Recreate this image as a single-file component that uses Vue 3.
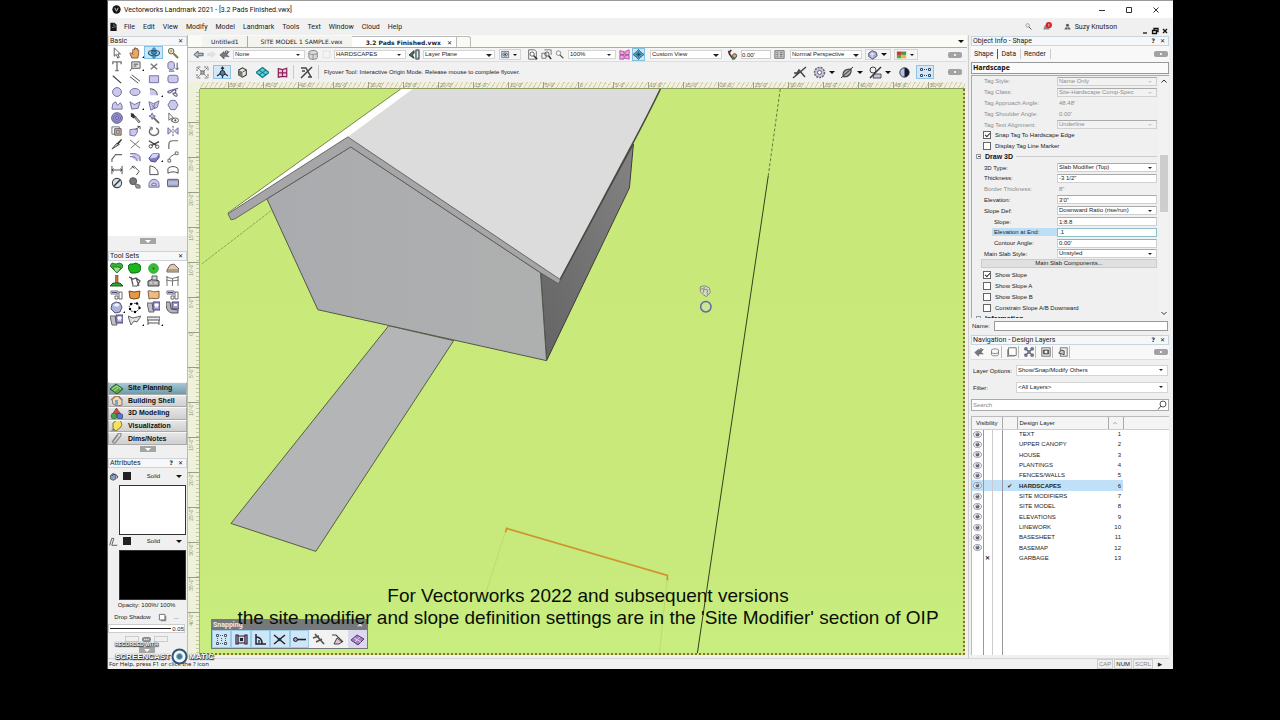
<script setup>
import { ref } from 'vue'

const S = 'stroke="#6a6a6a" fill="none"'
const L = 'stroke="#6d6b96" fill="#cbc8ee"'
const K = 'stroke="#444" fill="none"'

const icons = {
  logo: '<circle cx="6.500" cy="6.500" r="6" fill="#161616"/><path d="M4 4l2.500 5L9 4" stroke="#ddd" fill="none" stroke-width="1.300"/>',
  doc: '<path d="M2 1h6l3 3v9H2z" fill="#151515"/><path d="M7 2v4h4M4 8h4" stroke="#999" fill="none"/>',
  arrow: `<path d="M3.500 1v9l2.200-2 1.600 4 1.700-.8-1.700-3.700h3z" fill="#fff" stroke="#555"/>`,
  hand: `<path d="M3 12L1 7l1-1 2 2V3l1-1 1 1V1l1.500 0V2l1.500-.5v1.800l1.500 0v4l-1 4.700z" fill="#f0a860" stroke="#5a4028" stroke-width=".8"/>`,
  fly: `<path d="M6.500 0L9.500 3h-6zM6.500 13L3.500 10h6z" fill="#3c8db8"/><ellipse cx="6.500" cy="6.500" rx="6" ry="3" fill="#a8d4ea" stroke="#26567e" stroke-width="1.200"/><ellipse cx="6.500" cy="6" rx="2.800" ry="2" fill="#3a8fc0" stroke="#1b4468"/>`,
  zoom: `<circle cx="4.500" cy="4.500" r="3" fill="#fdf3c0" stroke="#555"/><path d="M7 7l5 5" stroke="#8a7440" stroke-width="2.200"/><path d="M3 4.500h3M4.500 3v3" stroke="#997" fill="none"/>`,
  text: `<path d="M2 4.500V2h9v2.500M6.500 2v9.500M4.500 11.500h4" stroke="#777" stroke-width="1.500" fill="none"/>`,
  callout: `<path d="M3 2h9v7H3z" fill="#e4e4e4" stroke="#555"/><path d="M3 9l-2 3M5 4.500h5M5 6.500h3" ${K}/>`,
  locus: `<path d="M3 4l7 6M10 4l-7 6" stroke="#777" stroke-width="1.500"/>`,
  symbol: `<path d="M1 4c0-3 7-3 7 0v4c0 3-7 3-7 0z" ${L}/><path d="M11 3v7M9 8.500l2 2 1.500-2M2 12h6" ${K}/>`,
  line: `<path d="M2 3l9 8" ${K} stroke-width="1.300"/>`,
  dline: `<path d="M1 4l9 7M3 2l9 7" ${K}/>`,
  rect: `<path d="M1.500 3h10v7.500h-10z" ${L}/>`,
  rrect: `<rect x="1" y="2.500" width="11" height="8" rx="2.500" ${L}/>`,
  circle: `<circle cx="6.500" cy="6.500" r="4.800" ${L}/>`,
  oval: `<ellipse cx="6.500" cy="6.500" rx="5.500" ry="3.800" ${L}/>`,
  arc: `<path d="M2 3c5 0 8 3 8 7L2 10z" fill="#cbc8ee"/><path d="M2 3c5 0 8 3 8 7" ${K}/>`,
  spiral: `<path d="M12 2.500C8 3 4 5 2 5.500S1 8 3 7.500s4-4 6-3-1 4-3 4M6 8c3-1 5 0 5 2s-3 1-4-1" stroke="#66648c" stroke-width="1.300" fill="none"/>`,
  poly: `<path d="M1 11l1-6 3-2 2 4 3-3 2 3v4z" ${L}/>`,
  poly2: `<path d="M1 3l5 3 6-3-2 7-7 1z" ${L}/>`,
  poly3: `<path d="M1 3l5 2 6-3-2 7-7 3zM4 6l4 4M8 5l-3 5" ${L}/>`,
  hex: `<path d="M4 1.500h5l3 5-3 5H4l-3-5z" ${L}/>`,
  globe: `<circle cx="6.500" cy="6.500" r="5.800" fill="#9a97d2" stroke="#5a5788"/><circle cx="6.500" cy="6.500" r="3.800" fill="none" stroke="#6d6aa3"/><circle cx="6.500" cy="6.500" r="1.800" fill="none" stroke="#6d6aa3"/>`,
  dropper: `<path d="M2 1l3 1 2 3-2 2-3-2z" fill="#333"/><path d="M6 5l5.500 6.500" stroke="#555" stroke-width="2.500"/><path d="M7 6l4 5" stroke="#ddd"/>`,
  wand: `<path d="M6 6l6 6" stroke="#666" stroke-width="2"/><path d="M4.500 1l1 2.500 2.500 1-2.500 1-1 2.500-1-2.500-2.500-1 2.500-1z" ${L}/>`,
  eyeptr: `<path d="M2 1v8l2-2 1 3 1-.5-1-3h2z" ${S}/><ellipse cx="9" cy="9" rx="3.500" ry="2.500" fill="#fff" stroke="#555"/><circle cx="9" cy="9" r="1.200" fill="#556"/>`,
  clip: `<path d="M1 2h8v8H1z" ${S}/><path d="M4 4h7v7H4z" fill="#e0bf8a" stroke="#555"/><path d="M6 6h3v3H6z" ${L}/>`,
  reshape: `<path d="M1 5l8-1v4l-3 4-5-1z" ${L}/><path d="M7 5l4-3M9 1.500h3v3" ${K}/>`,
  rotate: `<path d="M4 3a5 4.500 0 1 0 5 0" ${S} stroke-width="1.500"/><path d="M2 2l3 1-1 3" ${S}/>`,
  mirror: `<path d="M6.500 1v11" ${K} stroke-dasharray="2 1"/><path d="M1 3l4 3.500L1 10zM12 3L8 6.500l4 3.500z" ${L}/>`,
  knife: `<path d="M1 12l5-6 3 1z" fill="#ccc" stroke="#444"/><path d="M6 6l5-5 1 1-4 5z" fill="#333"/>`,
  trim: `<path d="M1 2l11 9M11 3l-9 8" ${S}/>`,
  scissors: `<path d="M1 3l8 5M12 4L4 8" stroke="#444" stroke-width="1.500"/><circle cx="3" cy="9" r="1.800" ${K}/><circle cx="10" cy="9.500" r="1.800" ${K}/>`,
  fillet: `<path d="M2 12V7c0-3 2-4 4-4h6" ${S} stroke-width="1.300"/>`,
  chamfer: `<path d="M1 12V9l4-5h7" ${S} stroke-width="1.300"/>`,
  offset: `<path d="M1 3c6-1 9 1 11 3v5M1 6c5 0 7 1 8 5" stroke="#66648c" fill="#cbc8ee"/>`,
  extrude: `<path d="M1 8l4-5 7 0v4l-4 5-5-1z" fill="#7f7bc8" stroke="#45426e"/><path d="M5 3l7 0-3 4-7 1z" fill="#d4d2f5"/>`,
  connect: `<path d="M2 9l2-3 5-3M9 1h3v3H9zM1 9h3v3H1z" ${S}/>`,
  dim: `<path d="M1 2v9M12 2v9M1 6.500h11M3 5L1 6.500 3 8M10 5l2 1.500L10 8" ${K}/>`,
  dim2: `<path d="M1 6l4-4 6 6-3 4M3 2l3 3" ${K}/>`,
  angle: `<path d="M2 2v9.500h9C11 6 8 3 2 2z" ${K}/>`,
  arcdim: `<path d="M1 10V5c3-3 8-3 11 0v5c-3-2-8-2-11 0z" ${K}/>`,
  nosign: `<circle cx="6.500" cy="6.500" r="5" fill="#d5e3ee" stroke="#444" stroke-width="1.200"/><path d="M10 3L3 10" stroke="#333" stroke-width="1.500"/>`,
  gears: `<circle cx="4.500" cy="4.500" r="3.800" fill="#777" stroke="#555"/><path d="M6 7l6 2v3H8z" fill="#999" stroke="#666"/>`,
  protr: `<path d="M1 11V8a5.500 5.500 0 0 1 11 0v3z" ${L}/><path d="M4 9a2.500 2.500 0 0 1 5 0z" fill="#fff" stroke="#66648c"/>`,
  plate: `<rect x=".5" y="2.500" width="12" height="8" rx="1" fill="#b8bae0" stroke="#555"/><path d="M1 4h11M1 9h11" stroke="#8a8cb0"/>`,

  plants: `<path d="M0 4l2-3 4 1 3-1 3 1 1 3-6 6z" fill="#35b035" stroke="#1b641b" stroke-width=".8"/><path d="M3 5c2 5 3 6 5 5l3-4-3-1z" fill="#9adf8a" stroke="#2d7a2d"/>`,
  bush: `<path d="M0 4l2-2 3 0 3-1 4 2 1 4-2 3-4 1-4 0-2-3z" fill="#19b81c" stroke="#0d6a12"/>`,
  tree: `<circle cx="6.500" cy="6.500" r="4.800" fill="#2cc430" stroke="#3aa03c"/><circle cx="6.500" cy="6.500" r="1" fill="#703c10"/>`,
  slab: `<path d="M1 8l3-5 4-1 5 5v3H1z" fill="#e6c6a4" stroke="#666"/><path d="M1 8h12" stroke="#777"/>`,
  stamp: `<path d="M5.500 0h2.500v8H5.500z" fill="#c87838" stroke="#69401c" stroke-width=".6"/><path d="M0 11l3-3h7l3 3z" fill="#2fa336" stroke="#185a1c"/>`,
  irrig: `<path d="M1 2l4 2 3-1 4 3-3 5-5 0M3 2l2 8M8 3l3 8" stroke="#555" fill="none" stroke-width="1.200"/>`,
  building: `<path d="M1 6l5-2 6 2v5H1z" fill="#aaa" stroke="#444"/><path d="M5 1h5v4H5z" fill="#d6d6d6" stroke="#555"/><path d="M3 8h2M7 8h3" stroke="#eee"/>`,
  fence: `<path d="M0 2l6 1.500L13 2M0 5l6 1 7-1M1 1v10M6.500 3v8M12 1v10" stroke="#777" fill="none"/>`,
  tag: `<path d="M1 3h7v3H1zM9 4h3v7H9zM5 8h3v3H5z" ${S}/><path d="M2 4.500h5" stroke="#448"/>`,
  orange: `<path d="M1 3l5 1 6-1-1 7-5 1-4-1z" fill="#e9983e" stroke="#6b4a26"/>`,
  peach: `<path d="M1 3c4-1 4 2 11 0v7c-4 2-6-1-10 1z" fill="#f0bb80" stroke="#7d6248"/>`,
  sphere: `<path d="M2 3l4-2 4 1 2 4-2 5-5 1-4-4z" fill="#aeb3da" stroke="#555580"/><path d="M3 4l4-2 3 2-3 2z" fill="#eef"/>`,
  nodes: `<path d="M3 3l6-1 3 5-4 4-5-1-2-4z" ${K} stroke-dasharray="2 1"/><circle cx="3" cy="3" r="1.200"/><circle cx="9" cy="2.500" r="1.200"/><circle cx="11.500" cy="7" r="1.200"/><circle cx="7" cy="11" r="1.200"/><circle cx="2" cy="8" r="1.200"/>`,
  panel: `<path d="M0 2h5l2 9H2z" fill="#c0c0c8" stroke="#666"/><path d="M6 1h7v8H6z" fill="#9c9acb" stroke="#45426e"/><path d="M8 3h3v2H8zM8 6h3" fill="#fff" stroke="#fff"/>`,
  panel2: `<path d="M0 1h4l1 7 7 1v3H6C2 11 0 9 0 1z" fill="#b4b4bc" stroke="#555"/><path d="M6 1h7v7H6z" fill="#9c9acb" stroke="#45426e"/><path d="M8 3h3v2H8z" fill="#fff"/>`,
  flag: `<path d="M0 2l5 2 8-2-4 6-3-1-3 4z" fill="#e2e2e2" stroke="#666"/>`,
  bench: `<path d="M0 3h13v3H0zM1 6v5M12 6v5M1 9h11" fill="#e8e8e8" stroke="#555"/>`,

  site: `<path d="M0 7l6-5 7 5-6 5z" fill="#5aa84c" stroke="#2b5a28"/><path d="M2 7l5-3 4 3M4 9l4-3" stroke="#b6e39a" fill="none"/>`,
  shell: `<path d="M2 5l5-4 5 4v6l-5 1-4-2z" fill="#f4d8b0" stroke="#777"/><path d="M1 6l6-5 5 5" stroke="#9a8266" fill="none" stroke-width="1.500"/><path d="M5 6h3v5H5z" fill="#78a4c8"/>`,
  shapes: `<path d="M6.500 1l4 6h-8z" fill="#d64a3e" stroke="#722" stroke-width=".6"/><circle cx="4" cy="9" r="3" fill="#4da04a" stroke="#264" stroke-width=".6"/><path d="M7 7l3-1 3 2v3l-3 1-3-1z" fill="#5b77c8" stroke="#236" stroke-width=".6"/>`,
  bulb: `<path d="M7 0a4.500 4.500 0 0 1 4 7L6 11 3 8V3z" fill="#f4e35a" stroke="#857b28"/><path d="M3 8l3 3-2 2-3-2z" fill="#888"/>`,
  clipn: `<path d="M2 10l6-8c3-2 4 0 2 3l-5 6c-2 1-3-1-1-3l4-5" stroke="#888" fill="none" stroke-width="1.200"/>`,

  back: `<path d="M1 6.500l5-4v2.500h6v3H6v2.500z" fill="#aebfc0" stroke="#556"/>`,
  fwd: `<path d="M12 6.500l-5-4v2.500H1v3h6v2.500z" fill="#e6e6e6" stroke="#d5d5d5"/>`,
  classes: `<path d="M1 7l5-4v2l6-2-3 4 3 2-6 0v3z" fill="#778" stroke="#444" stroke-width=".6"/><circle cx="9" cy="3.500" r="1.500" fill="#ccc" stroke="#555"/>`,
  stack: `<path d="M1 4c0-3 10-3 10 0v6c0 3-10 3-10 0z" fill="#d8d8d8" stroke="#777"/><path d="M1 5c0 2 10 2 10 0M6 6v6" stroke="#888" fill="none"/>`,
  blank: `<rect x="1.500" y="1.500" width="10" height="10" fill="#f4f4f4" stroke="#d8d8d8"/>`,
  plane: `<path d="M0 7l6-5v3l-2 2 2 4z" fill="#4c7565" stroke="#222"/><path d="M8 1h4v11H8z" fill="#8fa3ab" stroke="#444"/><path d="M10 3v7" stroke="#fff"/>`,
  viewEye: `<path d="M1 2h10v9H1z" fill="#dde" stroke="#555"/><ellipse cx="6" cy="6.500" rx="3.500" ry="2.300" fill="#b8dfe2" stroke="#346"/><circle cx="6" cy="6.500" r="1.200" fill="#123"/>`,
  fitPage: `<path d="M2 1h7l2 2v9H2z" fill="#fff" stroke="#555"/><circle cx="6" cy="6" r="2.500" ${K}/><path d="M8 8l4 4" stroke="#333" stroke-width="1.800"/>`,
  fitObj: `<path d="M4 1h8v6M1 5h5v6H1z" ${S}/><circle cx="7" cy="6" r="2.500" ${K}/><path d="M9 8l3 4" stroke="#333" stroke-width="1.800"/>`,
  mag: `<circle cx="5" cy="4.500" r="3.300" ${S}/><path d="M7 7l5 5" stroke="#555" stroke-width="1.800"/>`,
  pink: `<path d="M1 2l5 1v3.500H1zM7 3l5-2v5.500H7zM1 7.500h5V12H1zM7 7.500h5v4.500L7 11z" fill="#e9a7dc" stroke="#b04aa2"/>`,
  teal: `<path d="M0 6.500l4-3 2.500-3 2.500 3 4 3-4 3-2.500 3-2.500-3z" fill="#4aafc0" stroke="#14657c"/><path d="M3 6.500h7M6.500 3v7M4 4l5 5M9 4l-5 5" stroke="#125" stroke-width=".6"/>`,
  rot: `<path d="M2 2c0 4 2 5 4 8M5 1L3 4" stroke="#533" stroke-width="2" fill="none"/><circle cx="9" cy="8" r="2.500" fill="#cda38a" stroke="#444"/><path d="M5 9l2 3 3-1" stroke="#2c6a3a" fill="none" stroke-width="1.500"/>`,
  sheet: `<path d="M1 2h11v9H1z" fill="#c7c9cc" stroke="#666"/><path d="M3 4.500h2M7 4.500h3M3 6.500h2M7 6.500h3M3 8.500h2M7 8.500h3" stroke="#666"/>`,
  cloudball: `<path d="M2 5l4-3 5 2 1 4-5 4-5-3z" fill="#a9aed6" stroke="#446"/><path d="M4 6h5M6 4v6" stroke="#fff"/>`,
  render: `<path d="M1 3h5v4H1z" fill="#c43a2a"/><path d="M6 3h6v4H6z" fill="#5a8a5b"/><path d="M1 7h5v4H1z" fill="#54a63c"/><path d="M6 7h6v4H6z" fill="#ecb741"/>`,

  m1: `<path d="M2 2l9 9M11 2l-9 9M1 5V1h4M8 1h4v4M1 8v4h4M12 8v4H8" stroke="#777" fill="none" stroke-dasharray="2 .6"/><path d="M5 5h3v3H5z" fill="#bbb" stroke="#666"/>`,
  m2: `<path d="M6.500 1v11M1 10l5.500-4 5.500 4" stroke="#234" fill="none" stroke-width="1.300"/><path d="M4.500 3l2-3 2 3z" fill="#234"/><circle cx="6.500" cy="7" r="2.500" fill="#5d7a99" stroke="#234"/>`,
  m3: `<path d="M2 3.500L6.500 1 11 3.500v6L6.500 12 2 9.500z" fill="#eee8dc" stroke="#333" stroke-width="1.200"/><path d="M2 3.500L6.500 6v6L2 9.500z" fill="#777"/><path d="M11 3.500L6.500 6" ${K}/>`,
  m4: `<path d="M0 6.500l6.500-5 6.500 5-6.500 5z" fill="#5fd0d6" stroke="#127a86" stroke-width="1.200"/><path d="M3 4l7 5M10 4L3 9" stroke="#0a6370"/>`,
  m5: `<path d="M1.500 2l5 1 5-1.500v10L6.500 11l-5 1zM6.500 3v8M1.500 7h10" fill="#f0c8dc" stroke="#8b2058" stroke-width="1.400"/>`,
  m6: `<path d="M1 2h5l5 9M1 12L12 1M8 11h4M2 5h3" stroke="#444" fill="none" stroke-width="1.500"/>`,
  r1: `<path d="M0 12L13 1M3 9l3-5 6 7M1 7h5" fill="none" stroke="#444" stroke-width="1.500"/>`,
  r2: `<circle cx="6.500" cy="6.500" r="5" fill="#c5c6dc" stroke="#667" stroke-dasharray="2 1" stroke-width="1.500"/><circle cx="6.500" cy="6.500" r="2" fill="#fff" stroke="#667"/>`,
  r3: `<path d="M2 9c0-5 4-6 8-6 1 4-2 8-7 8z" fill="#aaa" stroke="#444" stroke-width="1.200"/><path d="M0 12L12 1" stroke="#333"/>`,
  r4: `<circle cx="4" cy="4" r="3" ${K}/><path d="M5 8h7v4H4z" fill="#c5c6dc" stroke="#555"/><path d="M1 12L12 1" stroke="#333" stroke-width="1.400"/>`,
  r5: `<circle cx="6.500" cy="6.500" r="5.500" fill="#b8c2e4" stroke="#223"/><path d="M6.500 1a5.500 5.500 0 0 1 0 11z" fill="#161b30"/>`,
  r6: `<path d="M1.500 2.500h2v2h-2zM9.500 2.500h2v2h-2zM1.500 8.500h2v2h-2zM9.500 8.500h2v2h-2z" fill="#fff" stroke="#346"/><path d="M5 3.500h3M5 9.500h3" stroke="#346" stroke-dasharray="1 1"/>`,

  bucket: `<path d="M2 5l4-3 4 3v5l-4 2-4-2z" fill="#8c9fc0" stroke="#334"/><path d="M4 6a4 4 0 0 1 8 3" stroke="#334" fill="none" stroke-width="1.300"/>`,
  pen: `<path d="M1 12L4 2h3l-3 10h8" stroke="#555" fill="none" stroke-width="1.300"/>`,
  shadow: `<path d="M4 4h8v8H4z" fill="#999"/><path d="M2 2h8v8H2z" fill="#fff" stroke="#444"/>`,
  chain: `<rect x="0" y="3" width="13" height="7" rx="3" fill="#888"/><path d="M3 6.500h7" stroke="#eee" stroke-width="2" stroke-dasharray="2 1"/>`,
  bell: `<path d="M0 11c2-1 1-7 5-7s3 6 5 7z" fill="#888"/><circle cx="8.500" cy="4.500" r="4.500" fill="#d8202a"/><path d="M8.500 2.500v4" stroke="#fff"/>`,
  user: `<circle cx="6.500" cy="4" r="2.800" fill="#555"/><path d="M1 12c0-6 11-6 11 0z" fill="#666"/><path d="M6.500 7v5" stroke="#ddd"/>`,

  n2: `<path d="M2 4c0-2 9-2 9 0v6c0 2-9 2-9 0zM2 7c0 2 9 2 9 0" ${S}/>`,
  n3: `<path d="M2 1h10v10H2zM1 3v10h9" fill="#fff" stroke="#555"/>`,
  n4: `<path d="M2 2l9 9M11 2l-9 9" stroke="#557" stroke-width="1.300"/><path d="M1 1h3v3H1zM9 1h3v3H9zM1 9h3v3H1zM9 9h3v3H9zM5 5h3v3H5z" fill="#99a" stroke="#446"/>`,
  n5: `<path d="M1 1h11v11H1z" fill="#eee" stroke="#555"/><path d="M3 4h7v5H3z" fill="#888" stroke="#333"/><circle cx="6.500" cy="6.500" r="1.500" fill="#fff"/>`,
  n6: `<path d="M3 1h9v11H3z" fill="#eee" stroke="#555"/><path d="M1 8l3-4 4 1v5L5 9z" stroke="#444" fill="#ccc" stroke-width="1.200"/>`,
  eye: `<ellipse cx="6.500" cy="6.500" rx="5.800" ry="4.200" fill="#eceef0" stroke="#778"/><circle cx="6.500" cy="6.500" r="2.800" fill="#667"/><path d="M5 5l2 0" stroke="#fff"/>`,

  s1: `<path d="M1.500 1.500h2v2h-2zM9.500 1.500h2v2h-2zM1.500 9.500h2v2h-2zM9.500 9.500h2v2h-2z" fill="#fff" stroke="#456"/><path d="M2.500 5v3M10.500 5v3M5 2.500h3M5 10.500h3M6.500 5v3" stroke="#456" stroke-dasharray="1 1"/>`,
  s2: `<path d="M1 2h2v9H1zM10 2h2v9h-2zM3 3h7v7H3z" fill="#dce" stroke="#223" stroke-width="1.200"/><path d="M5 5h3v3H5z" fill="#223"/>`,
  s3: `<path d="M2 1v10h10M2 4c4 0 6 3 6 7" stroke="#223" fill="none" stroke-width="1.500"/><path d="M4 7h2v3H4z" fill="#567"/>`,
  s4: `<path d="M1 2l11 9M12 2L1 11" stroke="#223" stroke-width="1.500"/><circle cx="6.500" cy="6.500" r="1.800" fill="#234"/>`,
  s5: `<path d="M2 6.500h11" stroke="#223" stroke-width="1.600"/><circle cx="2.500" cy="6.500" r="2" fill="#99b" stroke="#223"/>`,
  s6: `<path d="M3 1l9 10M1 5l6-2M4 9l6-3" stroke="#555" stroke-width="1.700"/>`,
  s7: `<path d="M1 2h4l7 7" stroke="#444" fill="none" stroke-width="1.200"/><path d="M3 11l3-6 5 4-3 2z" fill="#e3c4d4" stroke="#444"/>`,
  s8: `<path d="M0 7l6-5 7 4-6 6z" fill="#a47fc0" stroke="#513a70"/><path d="M3 5l7 4M9 4L4 9" stroke="#e5d0f2"/>`,
  cursor: `<path d="M2 2l4-1 5 2 1 5-4 4-3-2-3-3z" fill="#d3d8c2" stroke="#777" stroke-width=".8"/><path d="M3 4l6 1v5M6 2l-1 6" stroke="#8a8f7c" fill="none"/>`
}

// a trailing dot marks a tool that has a pop-out of related tools
const basicTools = ['arrow', 'hand.', 'fly', 'zoom', 'text', 'callout.', 'locus', 'symbol', 'line', 'dline', 'rect', 'rrect',
  'circle', 'oval', 'arc.', 'spiral', 'poly', 'poly2.', 'poly3', 'hex', 'globe', 'dropper', 'wand', 'eyeptr',
  'clip', 'reshape', 'rotate', 'mirror', 'knife', 'trim', 'scissors', 'fillet', 'chamfer', 'offset', 'extrude.', 'connect',
  'dim', 'dim2', 'angle', 'arcdim', 'nosign', 'gears', 'protr', 'plate']
const setTools = ['plants', 'bush', 'tree', 'slab', 'stamp', 'irrig', 'building', 'fence', 'tag', 'orange', 'peach', 'tag',
  'sphere.', 'nodes', 'panel', 'panel2', 'panel', 'flag.', 'bench.']
const svgOf = n => icons[n.replace('.', '')]
const more = n => n.endsWith('.')

const menus = ['File', 'Edit', 'View', 'Modify', 'Model', 'Landmark', 'Tools', 'Text', 'Window', 'Cloud', 'Help']
const sets = [['site', 'Site Planning'], ['shell', 'Building Shell'], ['shapes', '3D Modeling'], ['bulb', 'Visualization'], ['clipn', 'Dims/Notes']]
const snaps = ['s1', 's2', 's3', 's4', 's5', 's6', 's7', 's8']
const hMarks = Array.from({ length: 21 }, (_, i) => Math.abs(50 - i * 5)).map(n => (n ? n + "'-0\"" : '0'))
const vMarks = [30, 25, 20, 15, 10, 5, 0, 5, 10, 15, 20, 25, 30, 35, 40].map(n => (n ? n + "'-0\"" : '0'))

const rows = ref([
  { t: 'select', l: 'Tag Style:', v: 'Name Only', off: true },
  { t: 'select', l: 'Tag Class:', v: 'Site-Hardscape Comp-Spec', off: true },
  { t: 'plain', l: 'Tag Approach Angle:', v: "48.48'", off: true },
  { t: 'plain', l: 'Tag Shoulder Angle:', v: "0.00'", off: true },
  { t: 'select', l: 'Tag Text Alignment:', v: 'Underline', off: true },
  { t: 'check', l: 'Snap Tag To Hardscape Edge', v: true },
  { t: 'check', l: 'Display Tag Line Marker', v: false },
  { t: 'group', l: 'Draw 3D' },
  { t: 'select', l: '3D Type:', v: 'Slab Modifier (Top)' },
  { t: 'input', l: 'Thickness:', v: '-3 1/2"' },
  { t: 'plain', l: 'Border Thickness:', v: '8"', off: true },
  { t: 'input', l: 'Elevation:', v: "3'0\"" },
  { t: 'select', l: 'Slope Def:', v: 'Downward Ratio (rise/run)' },
  { t: 'input', l: 'Slope:', v: '1:8.8', sub: true },
  { t: 'input', l: 'Elevation at End:', v: '.1', sub: true, hot: true },
  { t: 'input', l: 'Contour Angle:', v: "0.00'", sub: true },
  { t: 'select', l: 'Main Slab Style:', v: 'Unstyled' },
  { t: 'button', l: 'Main Slab Components...' },
  { t: 'check', l: 'Show Slope', v: true },
  { t: 'check', l: 'Show Slope A', v: false },
  { t: 'check', l: 'Show Slope B', v: false },
  { t: 'check', l: 'Constrain Slope A/B Downward', v: false },
  { t: 'group', l: 'Information' }
])
const layers = ['TEXT', 'UPPER CANOPY', 'HOUSE', 'PLANTINGS', 'FENCES/WALLS', 'HARDSCAPES', 'SITE MODIFIERS', 'SITE MODEL', 'ELEVATIONS', 'LINEWORK', 'BASESHEET', 'BASEMAP', 'GARBAGE']
</script>

<template>
  <div class="stage">
    <div class="window">
      <header class="titlebar">
        <svg class="ic s9" viewBox="0 0 13 13" v-html="icons.logo" />
        <h1>Vectorworks Landmark 2021 - [3.2 Pads Finished.vwx]</h1>
        <span class="grow"></span>
        <div class="winbtns">
          <button aria-label="Minimize"><svg viewBox="0 0 8 8"><path d="M1 4.500h6" /></svg></button>
          <button aria-label="Maximize"><svg viewBox="0 0 8 8"><path d="M1.500 1.500h5v5h-5z" /></svg></button>
          <button aria-label="Close"><svg viewBox="0 0 8 8"><path d="M1.500 1.500l5 5M6.500 1.500l-5 5" /></svg></button>
        </div>
      </header>

      <nav class="menubar">
        <svg class="ic s9" viewBox="0 0 13 13" v-html="icons.doc" />
        <button v-for="m in menus" :key="m">{{ m }}</button>
        <span class="grow"></span>
        <div class="account">
          <svg class="ic s7" viewBox="0 0 13 13" v-html="icons.mag" />
          <svg class="ic s9" viewBox="0 0 13 13" v-html="icons.bell" />
          <span class="who"><svg class="ic s7" viewBox="0 0 13 13" v-html="icons.user" />Suzy Knutson</span>
        </div>
        <div class="mdi">
          <svg viewBox="0 0 8 8"><path d="M2 6h4" /></svg>
          <svg viewBox="0 0 8 8"><path d="M3 3V1.500h4v3H5M1.500 3.500h4v3h-4z" /></svg>
          <svg viewBox="0 0 8 8"><path d="M2 2l4 4M6 2L2 6" /></svg>
        </div>
      </nav>

      <div class="body">
        <aside class="left">
          <h2 class="phead">Basic<span class="grow"></span><button aria-label="Close Basic">✕</button></h2>
          <div class="palette basic">
            <button v-for="(n, i) in basicTools" :key="i" :class="{ on: n === 'fly', more: more(n) }" :aria-label="n">
              <svg class="ic" viewBox="0 0 13 13" v-html="svgOf(n)" />
            </button>
          </div>
          <div class="fold"><button aria-label="More tools"></button></div>
          <h2 class="phead">Tool Sets<span class="grow"></span><button aria-label="Close Tool Sets">✕</button></h2>
          <div class="palette toolset">
            <button v-for="(n, i) in setTools" :key="i" :class="{ more: more(n) }" :aria-label="n">
              <svg class="ic s13" viewBox="0 0 13 13" v-html="svgOf(n)" />
            </button>
          </div>
          <div class="sets">
            <button v-for="(s, i) in sets" :key="s[1]" :class="{ cur: i === 0 }">
              <svg class="ic s13" viewBox="0 0 13 13" v-html="icons[s[0]]" /><span>{{ s[1] }}</span>
            </button>
          </div>
          <div class="fold short"><button aria-label="More sets"></button></div>
          <h2 class="phead">Attributes<span class="grow"></span><button aria-label="Help">?</button><button aria-label="Close Attributes">✕</button></h2>
          <div class="attrs">
            <div class="arow"><svg class="ic s9" viewBox="0 0 13 13" v-html="icons.bucket" /><i class="sq"></i><span>Solid</span><b class="tri"></b></div>
            <button class="swatch" aria-label="Fill colour"></button>
            <div class="arow"><svg class="ic s9" viewBox="0 0 13 13" v-html="icons.pen" /><i class="sq"></i><span>Solid</span><b class="tri"></b></div>
            <button class="swatch dark" aria-label="Pen colour"></button>
            <p class="opacity">Opacity: 100%/ 100%</p>
            <p class="drop">Drop Shadow <svg class="ic s9" viewBox="0 0 13 13" v-html="icons.shadow" /> <span>...</span></p>
            <div class="weight"><i></i>0.05</div>
            <div class="ends"><i></i><svg class="ic s9" viewBox="0 0 13 13" v-html="icons.chain" /><i></i></div>
            <div class="fold"><button aria-label="More attributes"></button></div>
          </div>
        </aside>

        <main class="center">
          <div class="tabs">
            <button>Untitled1</button>
            <button class="second">SITE MODEL 1 SAMPLE.vwx</button>
            <button class="active">3.2 Pads Finished.vwx <span>✕</span></button>
            <i class="stub"></i>
            <span class="grow"></span><b class="tri"></b>
          </div>

          <div class="viewbar">
            <svg class="ic s11" viewBox="0 0 13 13" v-html="icons.back" />
            <svg class="ic s9" viewBox="0 0 13 13" v-html="icons.fwd" />
            <svg class="ic s11" viewBox="0 0 13 13" v-html="icons.classes" />
            <label class="sel w72"><select aria-label="Class"><option>None</option></select></label>
            <svg class="ic s11" viewBox="0 0 13 13" v-html="icons.stack" />
            <svg class="ic s9" viewBox="0 0 13 13" v-html="icons.blank" />
            <label class="sel w72"><select aria-label="Layer"><option>HARDSCAPES</option></select></label>
            <svg class="ic s11" viewBox="0 0 13 13" v-html="icons.plane" />
            <label class="sel w72 boxed"><select aria-label="Plane"><option>Layer Plane</option></select></label>
            <span class="combo eyes"><svg class="ic s9" viewBox="0 0 13 13" v-html="icons.viewEye" /><b class="tri small"></b></span>
            <span class="trio">
              <svg class="ic s11" viewBox="0 0 13 13" v-html="icons.fitPage" />
              <svg class="ic s11" viewBox="0 0 13 13" v-html="icons.fitObj" />
              <svg class="ic s9" viewBox="0 0 13 13" v-html="icons.mag" />
            </span>
            <label class="sel w48"><select aria-label="Zoom"><option>100%</option></select></label>
            <svg class="ic s11" viewBox="0 0 13 13" v-html="icons.pink" />
            <span class="hl"><svg class="ic s11" viewBox="0 0 13 13" v-html="icons.teal" /></span>
            <label class="sel w72 boxed"><select aria-label="View"><option>Custom View</option></select></label>
            <svg class="ic s11 after" viewBox="0 0 13 13" v-html="icons.rot" />
            <input class="ang" aria-label="Rotation" value="0.00'">
            <svg class="ic s11" viewBox="0 0 13 13" v-html="icons.sheet" />
            <label class="sel w72 boxed after"><select aria-label="Projection"><option>Normal Perspective</option></select></label>
            <span class="combo"><svg class="ic s11" viewBox="0 0 13 13" v-html="icons.cloudball" /><b class="tri"></b></span>
            <span class="combo"><svg class="ic s11" viewBox="0 0 13 13" v-html="icons.render" /><b class="tri small"></b></span>
            <span class="grow"></span><i class="pill"></i>
          </div>

          <div class="modebar">
            <span class="mb"><svg class="ic s14" viewBox="0 0 13 13" v-html="icons.m1" /></span>
            <span class="mb on"><svg class="ic s13" viewBox="0 0 13 13" v-html="icons.m2" /></span>
            <span class="mb"><svg class="ic s11" viewBox="0 0 13 13" v-html="icons.m3" /></span>
            <span class="mb"><svg class="ic s13" viewBox="0 0 13 13" v-html="icons.m4" /></span>
            <span class="mb"><svg class="ic s11" viewBox="0 0 13 13" v-html="icons.m5" /></span>
            <span class="mb edge"><svg class="ic s14" viewBox="0 0 13 13" v-html="icons.m6" /></span>
            <p>Flyover Tool: Interactive Origin Mode. Release mouse to complete flyover.</p>
            <span class="grow"></span>
            <div class="rmodes">
              <svg class="ic s14" viewBox="0 0 13 13" v-html="icons.r1" />
              <span><svg class="ic s13" viewBox="0 0 13 13" v-html="icons.r2" /><b class="tri"></b></span>
              <span><svg class="ic s13" viewBox="0 0 13 13" v-html="icons.r3" /><b class="tri"></b></span>
              <span><svg class="ic s13" viewBox="0 0 13 13" v-html="icons.r4" /><b class="tri"></b></span>
              <svg class="ic s11 moon" viewBox="0 0 13 13" v-html="icons.r5" />
              <span class="mb on"><svg class="ic s14" viewBox="0 0 13 13" v-html="icons.r6" /></span>
            </div>
            <i class="pill"></i>
          </div>

          <div class="sheet">
            <div class="corner"></div>
            <div class="hruler"><i v-for="(m, i) in hMarks" :key="i">{{ m }}</i></div>
            <div class="vruler"><i v-for="(m, i) in vMarks" :key="i"><u>{{ m }}</u></i></div>
            <div class="canvas">
              <svg class="scene" viewBox="200 89 764 565" preserveAspectRatio="xMinYMin slice">
                <defs>
                  <linearGradient id="wall" x1="0" y1="0" x2="1" y2="0"><stop offset="0" stop-color="#a9abae" /><stop offset="1" stop-color="#aeb0b0" /></linearGradient>
                  <linearGradient id="side" x1="1" y1="0" x2="0" y2="1"><stop offset="0" stop-color="#838383" /><stop offset="1" stop-color="#646464" /></linearGradient>
                  <linearGradient id="grass" x1="0" y1="0" x2="0" y2="1"><stop offset="0" stop-color="#c8e97a" /><stop offset=".5" stop-color="#c8e97b" /><stop offset=".65" stop-color="#c9ee80" /></linearGradient>
                </defs>
                <rect x="200" y="89" width="1400" height="900" fill="url(#grass)" />
                <path d="M202 264L271 211" stroke="#7d9150" stroke-dasharray="3 1" fill="none" stroke-width=".8" />
                <path d="M781 89L769 176" stroke="#66763a" stroke-dasharray="3 2" fill="none" />
                <path d="M769 176L698 654" stroke="#33401a" fill="none" />
                <path d="M389 326L454 341 316 552 231 524z" fill="#b3b5b6" stroke="#55603e" />
                <path d="M541 273L559 282 634 144 630 188 547 361z" fill="url(#side)" stroke="#3c3c3c" />
                <path d="M351 147L267 199 318 310 547 361 541 273z" fill="url(#wall)" stroke="#52564c" />
                <path d="M401 89L228 213 235 216 348 137 414 89z" fill="#fff" />
                <path d="M401 89L228 213" stroke="#6b7b45" fill="none" stroke-width=".9" />
                <path d="M348 137L413 89H661L633 144 560 280z" fill="#dcdcdc" />
                <path d="M661 89Q650 112 633 144L560 281" stroke="#484b42" stroke-width="1.600" fill="none" />
                <path d="M348 137L228 214 231 220 235 219 267 199 351 147 541 273 559 284 561 280z" fill="#a6a6a8" stroke="#5c5c5c" stroke-width=".9" />
                <path d="M507 529L484 600M668 577L660 654" stroke="#bbdb70" fill="none" />
                <path d="M506 533L507 529 668 576 668 581" stroke="#cf942d" stroke-width="1.700" fill="none" />
                <circle cx="706.500" cy="307" r="5.200" fill="#c9e596" stroke="#6468a0" stroke-width="1.500" />
                <g transform="translate(699 285)" v-html="icons.cursor" />
              </svg>
              <section class="snapping">
                <h2>Snapping<span class="grow"></span><button aria-label="Close Snapping">✕</button></h2>
                <div><button v-for="(s, i) in snaps" :key="s" :class="{ on: i < 5, soft: i === 7 }" :aria-label="s"><svg class="ic s13" viewBox="0 0 13 13" v-html="icons[s]" /></button></div>
              </section>
              <p class="caption">For Vectorworks 2022 and subsequent versions<br>the site modifier and slope definition settings are in the 'Site Modifier' section of OIP</p>
            </div>
          </div>
        </main>

        <aside class="right">
          <h2 class="phead">Object Info - Shape<span class="grow"></span><button aria-label="Help">?</button><button aria-label="Close Object Info">✕</button></h2>
          <div class="ptabs"><button class="cur">Shape</button><button>Data</button><button>Render</button><span class="grow"></span><i class="pill"></i></div>
          <div class="otype">Hardscape</div>
          <div class="props">
            <div class="plist">
              <template v-for="(r, i) in rows" :key="i">
                <div v-if="r.t === 'group'" class="prow group"><i></i><b>{{ r.l }}</b><hr></div>
                <label v-else-if="r.t === 'check'" class="prow chk"><input type="checkbox" v-model="r.v">{{ r.l }}</label>
                <div v-else-if="r.t === 'button'" class="prow wide"><button>{{ r.l }}</button></div>
                <div v-else class="prow" :class="{ off: r.off, sub: r.sub, hot: r.hot }">
                  <label :for="'p' + i">{{ r.l }}</label>
                  <span v-if="r.t === 'select'" class="sel"><select :id="'p' + i" :disabled="r.off"><option>{{ r.v }}</option></select></span>
                  <input v-else-if="r.t === 'input'" :id="'p' + i" v-model="r.v">
                  <output v-else :id="'p' + i">{{ r.v }}</output>
                </div>
              </template>
            </div>
            <div class="sbar"><svg viewBox="0 0 8 8"><path d="M1.500 5.500L4 3l2.500 2.500" /></svg><i></i><span class="grow"></span><svg viewBox="0 0 8 8"><path d="M1.500 3L4 5.500 6.500 3" /></svg></div>
          </div>
          <div class="namerow"><label for="nm">Name:</label><input id="nm"></div>

          <h2 class="phead nav">Navigation - Design Layers<span class="grow"></span><button aria-label="Help">?</button><button aria-label="Close Navigation">✕</button></h2>
          <div class="ntabs">
            <svg class="ic" viewBox="0 0 13 13" v-html="icons.classes" />
            <svg class="ic" viewBox="0 0 13 13" v-html="icons.n2" />
            <svg class="ic" viewBox="0 0 13 13" v-html="icons.n3" />
            <svg class="ic" viewBox="0 0 13 13" v-html="icons.n4" />
            <svg class="ic" viewBox="0 0 13 13" v-html="icons.n5" />
            <svg class="ic" viewBox="0 0 13 13" v-html="icons.n6" />
            <span class="grow"></span><i class="pill"></i>
          </div>
          <div class="opts">
            <label for="lo">Layer Options:</label><span class="sel"><select id="lo"><option>Show/Snap/Modify Others</option></select></span>
            <label for="fl">Filter:</label><span class="sel"><select id="fl"><option>&lt;All Layers&gt;</option></select></span>
          </div>
          <div class="search"><input placeholder="Search" aria-label="Search"><svg viewBox="0 0 10 10"><circle cx="6" cy="4" r="3" /><path d="M4 6L1 9.500" /></svg></div>
          <div class="lwrap">
            <table>
              <thead><tr><th colspan="3">Visibility</th><th></th><th class="dl">Design Layer</th><th class="num"><svg viewBox="0 0 8 8"><path d="M1.500 5.500L4 3l2.500 2.500" /></svg></th><th></th></tr></thead>
              <tbody>
                <tr v-for="(l, i) in layers" :key="l" :class="{ cur: i === 5, tall: i % 3 === 2 }">
                  <td class="c1"><svg v-if="i < 12" class="ic s9" viewBox="0 0 13 13" v-html="icons.eye" /></td>
                  <td class="c2">{{ i === 12 ? '✕' : '' }}</td><td class="c3"></td>
                  <td class="c4">{{ i === 5 ? '✔' : '' }}</td>
                  <td class="dl">{{ l }}</td><td class="num">{{ i + 1 }}</td><td class="rest"></td>
                </tr>
                <tr class="fill"><td class="c1"></td><td class="c2"></td><td class="c3"></td><td colspan="4"></td></tr>
              </tbody>
            </table>
          </div>
        </aside>
      </div>

      <footer class="status">
        <span>For Help, press F1 or click the ? icon</span><span class="grow"></span>
        <span class="k">CAP</span><span class="k num">NUM</span><span class="k">SCRL</span><b>▶</b>
      </footer>

      <div class="wm"><small>RECORDED WITH</small><div>SCREENCAST<svg viewBox="0 0 17 17"><circle cx="8.500" cy="8.500" r="7" /><circle class="in" cx="8.500" cy="8.500" r="3" /></svg>MATIC</div></div>
    </div>
  </div>
</template>

<style>
html, body { margin: 0; background: #000; }
</style>

<style scoped>
* { box-sizing: border-box; }
.stage { display: flex; height: 100vh; padding: 0 107px 51px; background: #000; font: 6px/8px "Liberation Sans", Arial, sans-serif; color: #222; overflow: hidden; }
.window { position: relative; flex: 1; min-width: 0; display: flex; flex-direction: column; background: #f0f0f0; border-top: 1px solid #9a9a9a; border-left: 1px solid #555; padding-right: 4px; }
button, input, select { font: inherit; color: inherit; margin: 0; padding: 0; border: 0; background: none; border-radius: 0; outline: 0; min-width: 0; }
select { appearance: none; width: 100%; height: 100%; opacity: 1; }
h1, h2, p { margin: 0; font-weight: 400; font-size: inherit; }
.grow { flex: 1; }
.ic { display: block; width: 12px; height: 12px; flex: none; }
.s7 { width: 7px; height: 7px; } .s9 { width: 9px; height: 9px; } .s11 { width: 11px; height: 11px; } .s13 { width: 13px; height: 13px; } .s14 { width: 15px; height: 13px; }
.tri { width: 0; height: 0; border: 3px solid transparent; border-top-color: #111; border-bottom: 0; flex: none; }
.tri.small { border-width: 2px 2px 0; }
.pill { width: 14px; height: 6px; border-radius: 2px; background: #a2a2a2; position: relative; flex: none; }
.pill::after { content: ""; position: absolute; left: 6px; top: 2px; width: 2px; height: 2px; background: #eee; }

.titlebar { display: flex; align-items: center; height: 17px; background: #fff; padding-left: 4px; font: 7px/10px Roboto, sans-serif; margin-right: -4px; color: #111; }
.titlebar h1 { margin-left: 3px; }
.winbtns { display: flex; gap: 19px; padding-right: 13px; }
.winbtns button { width: 8px; height: 8px; }
.winbtns svg, .mdi svg, .sbar svg, .num svg { display: block; width: 8px; height: 8px; fill: none; stroke: #333; stroke-width: 1; }
.menubar { display: flex; align-items: center; height: 17px; padding-left: 1px; font: 7px/10px Roboto, sans-serif; color: #222; gap: 8px; }
.menubar > .s9 { margin-right: -2px; }
.account { display: flex; align-items: center; gap: 11px; padding-right: 16px; }
.who { display: flex; gap: 4px; align-items: center; margin-left: 1px; }
.mdi { display: flex; gap: 2px; align-self: flex-end; }
.mdi svg { stroke-width: 1.300; stroke: #111; }

.body { flex: 1; min-height: 0; display: flex; }
.left { width: 80px; flex: none; display: flex; flex-direction: column; border-right: 1px solid #bbb; padding-top: 1px; }
.phead { display: flex; align-items: center; gap: 5px; height: 10px; flex: none; border: 1px solid #cfd3d8; background: #f6f7f9; padding: 0 3px 0 1px; font: 7px/8px Roboto, sans-serif; color: #222; }
.phead button { font: bold 6px/8px "DejaVu Sans", sans-serif; color: #222; }
.palette { display: grid; grid-template-columns: 17px repeat(3, 19px); align-content: start; background: #fff; grid-auto-rows: 13px; flex: none; overflow: hidden; }
.palette button { position: relative; display: grid; place-items: center; }
.palette .more::after { content: ""; position: absolute; right: 0; bottom: 1px; border: 1px solid transparent; border-right-color: #111; border-bottom-color: #111; }
.palette .on { background: #cbe6f6; box-shadow: inset 0 0 0 1px #84c0e4; }
.basic { height: 190px; }
.toolset { flex: 1; padding-top: 1px; }
.fold { height: 15px; flex: none; padding-top: 2px; }
.fold.short { height: 13px; padding-top: 1px; }
.fold button { position: relative; display: block; width: 16px; height: 6px; margin: 0 auto; background: #a5a5a5; }
.fold button::after { content: ""; position: absolute; left: 5px; top: 2px; border: 3px solid transparent; border-top-color: #fff; border-bottom: 0; }
.sets { display: grid; grid-template-rows: repeat(5, 1fr); height: 63px; flex: none; font: bold 7px/10px "Liberation Sans", Arial, sans-serif; }
.sets button { display: flex; align-items: center; gap: 5px; padding-left: 1px; border: 1px solid #aaa; border-top-color: #f8f8f8; background: linear-gradient(#e6e6e6, #cfcfcf); color: #111; overflow: hidden; }
.sets span { flex: 1; text-align: left; white-space: nowrap; }
.sets .cur { background: linear-gradient(#a8c8d4, #6d9cac); }
.attrs { height: 190px; flex: none; padding: 2px 2px 0 0; overflow: hidden; }
.arow { display: flex; align-items: center; height: 15px; gap: 5px; padding: 0 3px 3px 1px; }
.arow .sq { width: 8px; height: 8px; background: #222; }
.arow span { flex: 1; text-align: center; }
.swatch { display: block; width: 67px; height: 50px; margin: 0 0 0 11px; border: 1px solid #333; background: #fff; }
.swatch.dark { background: #000; margin-bottom: 1px; }
.opacity { text-align: center; line-height: 9px; }
.drop { display: flex; align-items: center; justify-content: center; height: 14px; gap: 7px; }
.weight { display: flex; align-items: center; height: 9px; background: #fff; border: 1px solid #ccc; padding-left: 1px; gap: 1px; }
.weight i { flex: 1; height: 1px; background: #222; }
.ends { display: flex; align-items: center; justify-content: center; gap: 3px; height: 12px; }
.ends i { width: 14px; height: 6px; border: 1px solid #ccc; }

.center { flex: 1; min-width: 0; display: flex; flex-direction: column; }
.tabs { display: flex; align-items: flex-end; height: 13px; background: #fbfbf6; border-bottom: 1px solid #b0a8ac; padding: 1px 3px 0 14px; font: 6px/9px "DejaVu Sans", sans-serif; }
.tabs button { height: 11px; white-space: nowrap; padding: 0 8px 0 9px; border-right: 1px solid #aaa; background: #f3f3f0; }
.tabs .second { padding: 0 9px 0 13px; border-right: 0; }
.tabs .active { font-weight: 700; background: #fff; padding: 0 4px 0 14px; border: 1px solid #bbb; border-width: 1px 1px 0 0; }
.tabs .active span { padding-left: 4px; }
.stub { width: 14px; height: 11px; border: 1px solid #bbb; border-left: 0; border-bottom: 0; border-radius: 0 3px 0 0; }
.tabs .tri { align-self: center; }
.viewbar { display: flex; align-items: center; height: 14px; padding: 0 5px 0 5px; gap: 3px; background: #f4f4f4; border-bottom: 1px solid #ddd; }
.sel { position: relative; display: block; height: 9px; border: 1px solid #d4d4d4; background: #fff; min-width: 0; flex: none; }
.sel select { display: block; padding-left: 1px; line-height: 7px; color: #222; }
.sel::after { content: ""; position: absolute; right: 4px; top: 3px; border: 2px solid transparent; border-top-color: #222; border-bottom: 0; pointer-events: none; }
.w72 { width: 72px; } .w48 { width: 48px; }
.boxed::after { border-width: 3px 3px 0; right: 2px; }
.combo { display: flex; align-items: center; gap: 3px; border: 1px solid #d4d4d4; padding: 0 3px 0 1px; height: 11px; }
.eyes { margin-left: 1px; }
.after { margin: 0 0 0 2px; }
.trio { display: flex; align-items: center; gap: 3px; margin: 0 1px 0 3px; }
.hl { background: #cbe6f6; box-shadow: 0 0 0 1px #84c0e4; margin-right: 3px; }
.ang { width: 30px; height: 9px; border: 1px solid #ccc; background: #fff; color: #222; }
.modebar { display: flex; align-items: center; height: 20px; padding: 0 5px 0 5px; gap: 2px; background: #f1f1f1; flex: none; }
.mb { display: grid; place-items: center; width: 18px; height: 14px; flex: none; }
.mb.on { background: #d2e8f6; box-shadow: inset 0 0 0 1px #90c4e6; }
.mb.edge { width: 26px; border: 1px solid #ccc; border-width: 0 1px; }
.modebar p { margin-left: 3px; white-space: nowrap; color: #222; }
.rmodes { display: flex; align-items: center; gap: 6px; padding-right: 12px; }
.rmodes > span:not(.mb) { display: flex; align-items: center; gap: 3px; }
.rmodes .moon { margin-left: 2px; }

.sheet { flex: 1; min-height: 0; display: grid; grid-template: 7px 1fr / 12px 1fr; padding: 0 2px 3px 0; }
.corner { background: #eef2da; }
.hruler, .vruler { display: flex; overflow: hidden; font-size: 5px; line-height: 6px; color: #8a8f78; background: #eef2da; }
.hruler { padding-left: 28px; border-bottom: 1px solid #8c9c60; background: repeating-linear-gradient(120deg, #eef2da 0 3px, #e0c9b8 3px 4px); }
.hruler i { flex: 0 0 35px; border-left: 1px solid #9a9f88; font-style: normal; padding-left: 1px; }
.vruler { flex-direction: column; padding-top: 33px; background: linear-gradient(90deg, #eef2da 0 8px, transparent 8px), repeating-linear-gradient(#eef2da 0 3px, #c4c9a0 3px 4px); border-right: 1px solid #a3b573; }
.vruler i { flex: 0 0 35px; border-top: 1px solid #9a9f88; display: flex; font-style: normal; align-items: flex-start; }
.vruler u { text-decoration: none; writing-mode: vertical-rl; padding-top: 2px; transform: rotate(180deg); }
.canvas { position: relative; border: 2px dotted #8c6a3c; border-width: 0 2px 2px 0; background: #c8e97a; overflow: hidden; min-width: 0; min-height: 0; }
.scene { display: block; width: 100%; height: 100%; }
.caption { position: absolute; left: 13px; right: 0; bottom: 24px; text-align: center; font: 19px/22px "Liberation Sans", Arial, sans-serif; color: #0a0f05; white-space: nowrap; }
.snapping { position: absolute; left: 11px; bottom: 4px; width: 157px; background: #76797c; padding: 0 1px 1px; }
.snapping h2 { display: flex; height: 11px; align-items: center; color: #eee; font: bold 7px/10px Roboto, sans-serif; padding: 0 4px 0 1px; }
.snapping div { display: grid; grid-template-columns: repeat(8, 1fr); height: 18px; background: #f2f2f2; }
.snapping div button { display: grid; place-items: center; }
.snapping .on { background: #cfe6f6; box-shadow: inset 0 0 0 1px #9ccbea; }
.snapping .soft { background: #dcd8ee; }

.right { width: 201px; flex: none; display: flex; flex-direction: column; padding: 1px 0 3px 2px; margin-left: 1px; border-left: 1px solid #ccc; }
.right .phead { padding-left: 1px; border-color: #c8d4de; }
.ptabs { display: flex; align-items: center; height: 16px; flex: none; padding: 0 1px 0 3px; font: 7px/10px Roboto, sans-serif; background: #f8f8f8; }
.ptabs button { padding-right: 4px; border-right: 1px solid #ccc; margin-right: 3px; }
.ptabs .cur { border-color: #555; }
.otype { height: 12px; flex: none; border: 1px solid #999; background: #fbfbfb; font: bold 7px/10px "Noto Sans", sans-serif; padding-left: 1px; color: #111; margin-bottom: 1px; }
.props { display: flex; height: 243px; flex: none; border-left: 1px solid #aaa; border-top: 1px solid #aaa; overflow: hidden; }
.plist { flex: 1; min-width: 0; display: grid; grid-template-rows: repeat(23, 1fr); height: 248px; padding-left: 4px; }
.prow { display: grid; grid-template-columns: 1fr 100px; align-items: center; padding: 0 2px 0 8px; min-height: 0; line-height: 8px; white-space: nowrap; }
.prow > label { min-width: 0; }
.prow input:not([type]), .prow > .sel { height: 9px; border: 1px solid #d0d0d0; border-top-color: #aaa; background: #fff; padding: 0 0 0 1px; }
.prow > .sel { padding: 0; }
.prow output { padding-left: 2px; }
.off { color: #8c8c8c; } .off .sel { background: #f2f2f2; } .off select { color: #8c8c8c; opacity: 1; } .off .sel::after { border-top-color: #ccc; }
.sub > label { padding-left: 10px; }
.hot > label { background: linear-gradient(90deg, transparent 8px, #bcdff6 8px); }
.prow.hot input:not([type]) { border-color: #8cc0c8; }
.chk { display: flex; gap: 4px; padding-left: 7px; }
.chk input { appearance: none; width: 8px; height: 8px; border: 1px solid #666; background: #fff; position: relative; }
.chk input:checked::after { content: ""; position: absolute; left: 1px; top: 1px; width: 4px; height: 2px; border: 1px solid #333; border-width: 0 0 1px 1px; transform: rotate(-45deg); }
.group { display: flex; gap: 3px; padding-left: 0; font-size: 7px; color: #111; }
.group i { width: 5px; height: 5px; border: 1px solid #999; background: linear-gradient(#555, #555) center / 2px 1px no-repeat; margin-right: 1px; }
.group hr { flex: 1; border: 0; border-top: 1px solid #ccc; margin: 0; }
.wide { display: block; padding-left: 5px; }
.wide button { display: block; width: 100%; height: 9px; background: #e0e0e0; border: 1px solid #ccc; line-height: 7px; }
.sbar { width: 9px; flex: none; display: flex; flex-direction: column; align-items: center; background: #f2f2f2; padding: 1px 0; margin-right: 1px; }
.sbar i { width: 8px; height: 57px; margin-top: 70px; background: #cdcdcd; }
.namerow { display: flex; align-items: center; gap: 4px; height: 14px; flex: none; padding: 2px 1px 1px 1px; }
.namerow input { flex: 1; height: 10px; background: #fff; border: 1px solid #999; }
.phead.nav { margin-top: 3px; }
.ntabs { display: flex; align-items: center; height: 15px; flex: none; gap: 4px; padding: 0 1px 0 2px; background: #f8f8f8; border-bottom: 1px solid #ddd; }
.ntabs .ic { padding: 1px 1px; border-right: 1px solid #bbb; box-sizing: content-box; width: 10px; height: 10px; }
.ntabs .ic:first-child { border: 0; }
.opts { display: grid; grid-template-columns: 43px 1fr; row-gap: 6px; align-items: center; padding: 5px 1px 6px 2px; white-space: nowrap; flex: none; }
.opts .sel { height: 11px; }
.opts select { line-height: 9px; }
.search { display: flex; align-items: center; height: 12px; flex: none; border: 1px solid #aaa; background: #fff; padding: 0 1px; margin-bottom: 5px; }
.search input { flex: 1; height: 10px; }
.search svg { width: 10px; height: 10px; fill: none; stroke: #555; }
.search input::placeholder { color: #888; opacity: 1; }
.lwrap { flex: 1; min-height: 0; background: #fff; border: 1px solid #bbb; border-width: 1px 0 0 1px; overflow: hidden; }
table { width: 100%; height: 100%; border-collapse: collapse; table-layout: auto; }
th, td { padding: 0; font-weight: 400; text-align: left; line-height: 8px; height: 10px; white-space: nowrap; }
.tall td { height: 11px; }
th { height: 12px; background: #f4f4f4; border-right: 1px solid #aaa; border-bottom: 1px solid #ccc; }
th:first-child { text-align: center; }
th:last-child { border-right: 0; }
.c1 { width: 11px; border-right: 1px solid #999; } .c1 svg { margin: 0 auto; }
.c2 { width: 9px; border-right: 1px solid #ccc; text-align: center; font-weight: 700; }
.c3 { width: 10px; border-right: 1px solid #999; }
.c4 { width: 15px; text-align: center; font-family: "DejaVu Sans", sans-serif; }
.dl { width: 91px; padding-left: 2px; }
.num { width: 15px; text-align: right; padding-right: 2px; }
.num svg { margin: 0 auto; stroke: #888; height: 6px; }
tr.cur td:not(.rest) { background: #bfe0f6; }
tr.cur .dl { font-weight: 700; }
.fill td { height: auto; }

.status { display: flex; align-items: center; height: 11px; flex: none; padding: 0 7px 0 1px; gap: 1px; font: 6px/8px "Noto Sans", sans-serif; border-top: 1px solid #d5d5d5; }
.status .k { border: 1px solid #ccc; padding: 0 1px; color: #888; width: auto; font: 6px/8px "Liberation Sans", Arial, sans-serif; }
.status .k.num { color: #111; }
.status b { font-size: 5px; padding-left: 4px; }
.wm { position: absolute; left: 7px; bottom: 4px; color: #fff; text-shadow: 0 0 1px #222, 1px 1px 1px #333, 0 1px 1px #444; font: bold 8px/9px "Liberation Sans", Arial, sans-serif; }
.wm small { display: block; font-size: 5px; line-height: 7px; }
.wm div { display: flex; align-items: center; height: 17px; gap: 1px; }
.wm svg { width: 17px; height: 17px; fill: #f4f8fa; stroke: #2d5876; stroke-width: 2; }
.wm .in { fill: #3c7896; stroke: #9bc; stroke-width: 1; }
</style>
